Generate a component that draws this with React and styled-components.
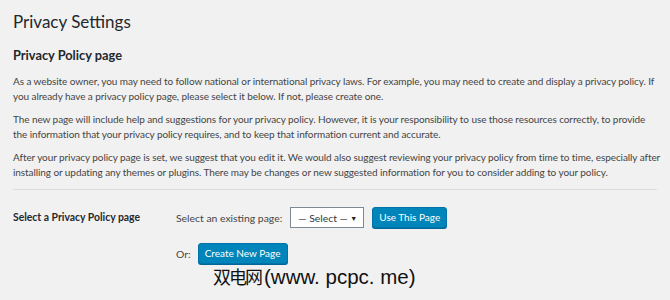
import React from 'react';
import styled, { createGlobalStyle } from 'styled-components';

const GlobalStyle = createGlobalStyle`
  html, body {
    margin: 0;
    padding: 0;
    background: #f1f1f1;
  }
  body {
    font-family: Lato, "Open Sans", sans-serif;
    color: #444;
  }
`;

const Page = styled.div`
  width: 670px;
  height: 300px;
  box-sizing: border-box;
  padding: 9px 13px 0 13px;
  overflow: hidden;
`;

const Title = styled.h1`
  margin: 0;
  font-size: 17px;
  font-weight: 400;
  line-height: 26px;
  color: #23282d;
`;

const SectionTitle = styled.h2`
  margin: 11px 0 10px;
  font-size: 12.8px;
  font-weight: 700;
  line-height: 18px;
  color: #23282d;
`;

const Text = styled.p`
  margin: 0 0 8px;
  font-size: 10px;
  letter-spacing: -0.08px;
  line-height: 15px;
  width: 648px;
`;

const Rule = styled.hr`
  border: 0;
  border-top: 1px solid #ddd;
  margin: 9px 0 0;
  width: 644px;
`;

const FormRow = styled.div`
  display: grid;
  grid-template-columns: 163px 1fr;
  margin-top: 17px;
`;

const RowLabel = styled.div`
  font-size: 10.4px;
  font-weight: 700;
  color: #23282d;
  line-height: 21px;
`;

const Controls = styled.div`
  display: flex;
  flex-direction: column;
  gap: 15px;
`;

const Line = styled.div`
  display: flex;
  align-items: center;
  gap: ${p => p.$gap || 8}px;
  font-size: 10.4px;
  white-space: nowrap;
`;

const SelectBox = styled.div`
  box-sizing: border-box;
  width: 74px;
  height: 21px;
  border: 1px solid #7e8993;
  background: #fff;
  display: flex;
  align-items: center;
  justify-content: space-between;
  padding: 0 6px 0 7px;
  font-size: 10.4px;
  color: #32373c;
  white-space: nowrap;
`;

const Caret = styled.span`
  font-size: 7px;
  color: #222;
`;

const Button = styled.button`
  box-sizing: border-box;
  height: 21px;
  width: ${p => p.$w}px;
  padding: 0;
  border: 1px solid #0073aa;
  border-radius: 3px;
  background: #0085ba;
  color: #fff;
  font-family: Lato, "Open Sans", sans-serif;
  font-size: 10px;
  line-height: 19px;
  box-shadow: 0 1px 0 #006799;
  white-space: nowrap;
`;

const Watermark = styled.div`
  margin: 0 0 0 200px;
  font-family: "Liberation Sans", "Noto Sans CJK SC", sans-serif;
  font-size: 20.5px;
  line-height: 24px;
  color: #111;
  white-space: nowrap;
`;

const WatermarkCjk = styled.span`
  font-family: "Noto Sans CJK SC", sans-serif;
  font-size: 18px;
  letter-spacing: -2px;
  margin-right: 3px;
`;

export default function App() {
  return (
    <>
      <GlobalStyle />
      <Page>
        <Title>Privacy Settings</Title>
        <SectionTitle>Privacy Policy page</SectionTitle>
        <Text>
          As a website owner, you may need to follow national or international privacy laws. For example, you may need to create and display a privacy policy. If you already have a privacy policy page, please select it below. If not, please create one.
        </Text>
        <Text>
          The new page will include help and suggestions for your privacy policy. However, it is your responsibility to use those resources correctly, to provide the information that your privacy policy requires, and to keep that information current and accurate.
        </Text>
        <Text>
          After your privacy policy page is set, we suggest that you edit it. We would also suggest reviewing your privacy policy from time to time, especially after installing or updating any themes or plugins. There may be changes or new suggested information for you to consider adding to your policy.
        </Text>
        <Rule />
        <FormRow>
          <RowLabel>Select a Privacy Policy page</RowLabel>
          <Controls>
            <Line>
              <span>Select an existing page:</span>
              <SelectBox>
                <span>— Select —</span>
                <Caret>▼</Caret>
              </SelectBox>
              <Button $w={75}>Use This Page</Button>
            </Line>
            <Line $gap={7}>
              <span>Or:</span>
              <Button $w={90}>Create New Page</Button>
            </Line>
          </Controls>
        </FormRow>
        <Watermark>
          <WatermarkCjk>双电网</WatermarkCjk>(www. pcpc. me)
        </Watermark>
      </Page>
    </>
  );
}
